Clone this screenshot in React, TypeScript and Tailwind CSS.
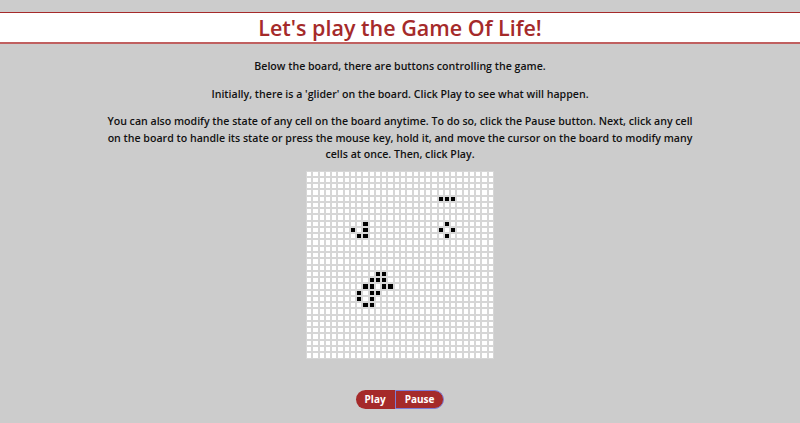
import React from "react";

const SIZE = 30;

// live cells as [row, col]
const LIVE: [number, number][] = [
  // blinker
  [4, 21], [4, 22], [4, 23],
  // glider
  [8, 9], [9, 7], [9, 9], [10, 8], [10, 9],
  // tub
  [8, 22], [9, 21], [9, 23], [10, 22],
  // blob
  [16, 11], [16, 12],
  [17, 10], [17, 11], [17, 12],
  [18, 9], [18, 10], [18, 12], [18, 13],
  [19, 8], [19, 10], [19, 11],
  [20, 8], [20, 10],
  [21, 9], [21, 10],
];

const liveSet = new Set(LIVE.map(([r, c]) => r * SIZE + c));

function Board() {
  const cells = [];
  for (let i = 0; i < SIZE * SIZE; i++) {
    const alive = liveSet.has(i);
    cells.push(
      <div
        key={i}
        className={alive ? "bg-black border border-[#d6d6d6]" : "bg-white border border-[#d6d6d6]"}
      />
    );
  }
  return (
    <div className="grid grid-cols-[repeat(30,1fr)] grid-rows-[repeat(30,1fr)] w-[188px] h-[188px] bg-[#d6d6d6]">
      {cells}
    </div>
  );
}

export default function App() {
  return (
    <div className="min-h-[423px] bg-[#cccccc] text-[#111] font-['Open_Sans',sans-serif] pt-3">
      <header className="bg-white border-t border-[#a52a2a] border-b-2 border-b-[#c06060] h-[32px] flex items-center justify-center">
        <h1 className="text-[21.5px] font-semibold text-[#a52a2a] leading-none">Let's play the Game Of Life!</h1>
      </header>

      <main className="flex flex-col items-center">
        <div className="w-[595px] text-center text-[10.6px] font-semibold leading-[16.5px] mt-[14px]">
          <p>Below the board, there are buttons controlling the game.</p>
          <p className="mt-[11px]">Initially, there is a 'glider' on the board. Click Play to see what will happen.</p>
          <p className="mt-[11px]">
            You can also modify the state of any cell on the board anytime. To do so, click the Pause button. Next, click any cell on the board to handle its state or press the mouse key, hold it, and move the cursor on the board to modify many cells at once. Then, click Play.
          </p>
        </div>

        <div className="mt-[8px]">
          <Board />
        </div>

        <div className="mt-[31px] flex">
          <button className="h-[19px] px-[9px] rounded-l-full bg-[#a52a2a] text-white text-[10px] font-bold leading-none">
            Play
          </button>
          <button className="h-[19px] px-[9px] rounded-r-full bg-[#a52a2a] text-white text-[10px] font-bold leading-none border border-[#7d7dd6]">
            Pause
          </button>
        </div>
      </main>
    </div>
  );
}
